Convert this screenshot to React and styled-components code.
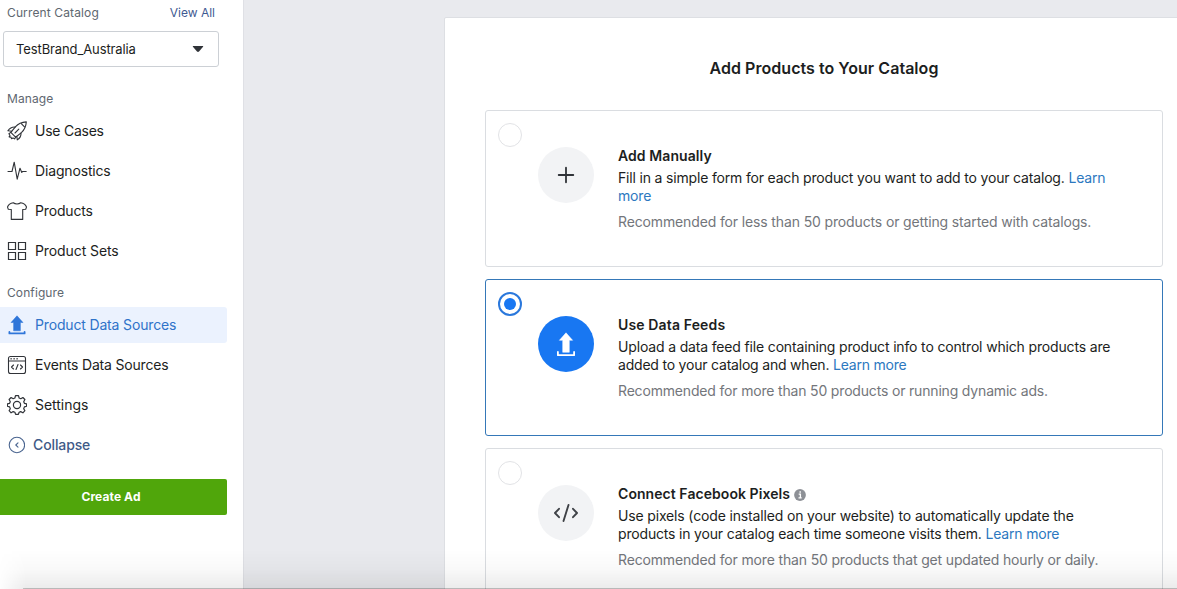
import React from "react";
import styled, { createGlobalStyle } from "styled-components";

const GlobalStyle = createGlobalStyle`
  * { box-sizing: border-box; }
  html, body { margin: 0; overflow: hidden; }
  body { font-family: Inter, Roboto, "Liberation Sans", sans-serif; color: #1c1e21; background: #e9eaee; }
`;

const Page = styled.div`
  position: relative;
  display: flex;
  width: 1177px;
  height: 589px;
  overflow: hidden;
`;

const Sidebar = styled.aside`
  width: 244px;
  flex: none;
  background: #fff;
  border-right: 1px solid #dfe0e5;
`;

const CatalogHeader = styled.div`
  display: flex;
  justify-content: space-between;
  padding: 4px 28px 0 7px;
  height: 31px;
  font-size: 12px;
  line-height: 18px;
  letter-spacing: 0.13px;
  color: #606770;
`;

const ViewAll = styled.a`
  letter-spacing: 0;
  color: #3f5a92;
`;

const CatalogSelect = styled.div`
  display: flex;
  align-items: center;
  justify-content: space-between;
  width: 216px;
  height: 36px;
  margin-left: 3px;
  padding: 0 14px 0 12px;
  border: 1px solid #ccd0d5;
  border-radius: 3px;
  font-size: 13px;
  letter-spacing: -0.11px;
`;

const SectionLabel = styled.div`
  height: ${(p) => p.$height}px;
  padding: ${(p) => p.$top}px 0 0 7px;
  font-size: 12px;
  line-height: 16px;
  letter-spacing: 0.1px;
  color: #606770;
`;

const NavRow = styled.div`
  display: flex;
  align-items: center;
  width: 227px;
  height: 36px;
  margin-bottom: 4px;
  padding-left: 7px;
  gap: 8px;
  border-radius: 0 3px 3px 0;
  background: ${(p) => (p.$active ? "#ebf2fe" : "transparent")};
  color: ${(p) => p.$color || "#1c1e21"};
  font-size: 14px;
  font-weight: ${(p) => p.$weight || 400};
  letter-spacing: ${(p) => p.$ls ?? -0.16}px;
  white-space: nowrap;
  svg { flex: none; }
`;

const NavLabel = styled.span`
  padding-bottom: 2px;
`;

const NavItem = ({ icon, children, ...rest }) => (
  <NavRow {...rest}>{icon}<NavLabel>{children}</NavLabel></NavRow>
);

const CreateButton = styled.div`
  display: flex;
  align-items: center;
  justify-content: center;
  width: 227px;
  height: 36px;
  margin-top: 16px;
  padding: 0 5px 1px 0;
  border-radius: 0 2px 2px 0;
  background: #50a60b;
  color: #fff;
  font-size: 12px;
  font-weight: 700;
  letter-spacing: 0.1px;
`;

const Main = styled.main`
  flex: 1;
  padding: 17px 0 0 200px;
`;

const Panel = styled.section`
  width: 760px;
  height: 640px;
  padding: 0 40px;
  background: #fff;
  border: 1px solid #dddfe3;
  border-radius: 2px;
`;

const PanelTitle = styled.h1`
  width: 678px;
  height: 92px;
  margin: 0;
  padding-top: 40px;
  font-size: 16px;
  font-weight: 600;
  line-height: 20px;
  letter-spacing: 0.04px;
  text-align: center;
`;

const Card = styled.div`
  display: flex;
  width: 678px;
  height: 157px;
  margin-bottom: 12px;
  padding: 12px;
  border: 1px solid ${(p) => (p.$active ? "#3578b8" : "#dadde1")};
  border-radius: 3px;
`;

const Radio = styled.span`
  display: flex;
  align-items: center;
  justify-content: center;
  flex: none;
  width: 24px;
  height: 24px;
  border-radius: 50%;
  border: ${(p) => (p.$active ? "2px solid #2a78dc" : "1px solid #e2e3e6")};
  &::after {
    content: "";
    width: 12px;
    height: 12px;
    border-radius: 50%;
    background: ${(p) => (p.$active ? "#1877f2" : "transparent")};
  }
`;

const IconDisc = styled.span`
  display: flex;
  align-items: center;
  justify-content: center;
  flex: none;
  width: 56px;
  height: 56px;
  margin: 24px 24px 0 16px;
  border-radius: 50%;
  background: ${(p) => (p.$active ? "#1877f2" : "#f2f3f5")};
`;

const CardText = styled.div`
  padding-top: 24px;
  font-size: 14px;
  line-height: 18px;
  white-space: nowrap;
`;

const CardTitle = styled.div`
  display: flex;
  align-items: center;
  gap: 4px;
  height: 18px;
  margin-bottom: 4px;
  font-weight: 600;
  letter-spacing: ${(p) => p.$ls || 0}px;
  svg { position: relative; top: 1px; }
`;

const Line = styled.div`
  letter-spacing: ${(p) => p.$ls ?? -0.16}px;
`;

const Hint = styled(Line)`
  margin-top: 8px;
  color: #73767b;
`;

const Link = styled.a`
  color: #2c78bf;
`;

const BottomShade = styled.div`
  position: absolute;
  left: 0;
  right: 0;
  bottom: 0;
  height: 40px;
  background: linear-gradient(to bottom, rgba(0, 0, 0, 0), rgba(0, 0, 0, 0.022) 50%, rgba(0, 0, 0, 0.08));
  mask-image: linear-gradient(to right, rgba(0, 0, 0, 0.1), #000 26px);
  &::after {
    content: "";
    position: absolute;
    left: 23px;
    right: 0;
    bottom: 0;
    height: 1px;
    background: rgba(0, 0, 0, 0.22);
  }
`;

const Stroke = ({ size = 20, color = "#303338", width = 1.1, children }) => (
  <svg width={size} height={size} viewBox={`0 0 ${size} ${size}`} fill="none" stroke={color}
    strokeWidth={width} strokeLinecap="round" strokeLinejoin="round">{children}</svg>
);

const RocketIcon = () => (
  <Stroke>
    <path d="M19.300.9C15 1.200 11.200 2.700 8.600 5.600L3.800 11.400l4.800 4.800 5.800-4.600c3-2.700 4.600-6.400 4.900-10.700Z" />
    <path d="M14.300 2.600l3.200 3.200" />
    <path d="M8.200 6C5.300 5.800 2.600 7.200.9 9.800l3.900.4M14 12c.2 2.800-1.100 5.200-3.700 6.900l-.5-3.600" />
    <path d="M3.800 11.400 1.900 12.800 3 14.500l-.9 1.400 1.900.2.5 1.600 1.500-.8 1.600 1 1-1.700" />
    <path d="M8 12l3.800-3.800" />
  </Stroke>
);

const PulseIcon = () => (
  <Stroke>
    <path d="M1 10.500h4L7.200 1.200l3 17 2.800-11 1.800 4.300 .6-1h3.800" />
  </Stroke>
);

const ShirtIcon = () => (
  <Stroke>
    <path d="M6.300 1.800C4.200 2.100 1.500 3.400.5 6.100l.8 2.200 3 .2v9.900h11.400V8.500l3-.2.8-2.200c-1-2.700-3.700-4-5.800-4.300-2 1.600-5.400 1.600-7.400 0Z" />
  </Stroke>
);

const GridIcon = () => (
  <Stroke width={1.2}>
    <path d="M1.500 1.500h7v7h-7zM11.500 1.500h7v7h-7zM1.500 11.500h7v7h-7zM11.500 11.500h7v7h-7z" strokeLinejoin="miter" />
  </Stroke>
);

const UploadIcon = () => (
  <svg width="20" height="20" viewBox="0 0 20 20" fill="#2f76d9">
    <path d="M10 .8 16 7.500h-2.600v8.300H6.600V7.500H4Z" stroke="#2f76d9" strokeWidth=".5" strokeLinejoin="round" />
    <path d="M2.400 17v1.400h15.200V17" fill="none" stroke="#2f76d9" strokeWidth="1.800" strokeLinecap="round" strokeLinejoin="round" />
  </svg>
);

const WindowCodeIcon = () => (
  <Stroke>
    <rect x="1.500" y="1.500" width="17" height="17" rx="2" />
    <path d="M1.500 6h17" />
    <path d="M6.500 10 4.500 12l2 2M13.500 10l2 2-2 2M11 9.500l-2 5" />
    <path d="M3.500 3.800h1.200M6.500 3.800h1.200M9.500 3.800h1.200" strokeWidth="1.500" strokeLinecap="butt" />
  </Stroke>
);

const GearIcon = () => (
  <Stroke width={1.2}>
    <circle cx="10" cy="10" r="3.600" />
    <path d="M8.500.7h3l.6 2.300 1.700.7 2.100-1.200 2 2-1.200 2.200.7 1.600 2.200.6v2.300l-2.200.7-.7 1.800 1.200 2-2 2.100-2.200-1.200-1.600.7-.7 2.100H8.600L7.900 17.300l-1.700-.7-2.100 1.200-2-2.100 1.200-2-.7-1.800-2.200-.7V8.900l2.200-.6.7-1.600-1.200-2.200 2-2 2.100 1.200L7.900 3Z" />
  </Stroke>
);

const CollapseIcon = () => (
  <Stroke size={18} color="#4a6590">
    <circle cx="9.900" cy="9" r="7.700" />
    <path d="M11 6.800 8.800 9l2.200 2.200" />
  </Stroke>
);

const PlusIcon = () => (
  <svg width="18" height="18" viewBox="0 0 18 18" stroke="#303338" strokeWidth="1.800" strokeLinecap="round">
    <path d="M9 1.700v14.600M1.700 9h14.600" />
  </svg>
);

const FeedIcon = () => (
  <svg width="20" height="26" viewBox="0 0 20 26" fill="#fff">
    <path d="M10 1.800 16.600 9.300H13.300v12H6.700v-12H3.400Z" stroke="#fff" strokeWidth=".5" strokeLinejoin="round" />
    <path d="M1.900 21v3.200h16.200V21" fill="none" stroke="#fff" strokeWidth="1.800" strokeLinejoin="round" strokeLinecap="round" />
  </svg>
);

const CodeIcon = () => (
  <svg width="26" height="20" viewBox="0 0 26 20" fill="none" stroke="#3f4247" strokeWidth="1.900" strokeLinecap="round" strokeLinejoin="round">
    <path d="M6 5.800 2 10l4 4.200M20 5.800l4 4.200-4 4.200" />
    <path d="M15.500 2 10.500 18" />
  </svg>
);

const InfoIcon = () => (
  <svg width="12" height="12" viewBox="0 0 12 12">
    <circle cx="6" cy="6" r="5.900" fill="#8d9096" />
    <path d="M4.700 5.200h1.700v3.500M4.500 8.900h3.200M5.500 3h1.400" fill="none" stroke="#fff" strokeWidth="1.300" />
  </svg>
);

export default function App() {
  return (
    <>
      <GlobalStyle />
      <Page>
        <Sidebar>
          <CatalogHeader><span>Current Catalog</span><ViewAll>View All</ViewAll></CatalogHeader>
          <CatalogSelect>
            <span>TestBrand_Australia</span>
            <svg width="12" height="8" viewBox="0 0 12 8"><path d="M1.200 1h9.600q.8 0 .3.700L7 6.600q-1 .9-2 0L.9 1.700Q.4 1 1.200 1Z" fill="#303338" /></svg>
          </CatalogSelect>
          <SectionLabel $top={24} $height={46}>Manage</SectionLabel>
          <NavItem icon={<RocketIcon />} $ls={-0.25}>Use Cases</NavItem>
          <NavItem icon={<PulseIcon />}>Diagnostics</NavItem>
          <NavItem icon={<ShirtIcon />}>Products</NavItem>
          <NavItem icon={<GridIcon />} $ls={-0.09}>Product Sets</NavItem>
          <SectionLabel $top={12} $height={34}>Configure</SectionLabel>
          <NavItem icon={<UploadIcon />} $active $color="#2f73c9">Product Data Sources</NavItem>
          <NavItem icon={<WindowCodeIcon />} $ls={-0.18}>Events Data Sources</NavItem>
          <NavItem icon={<GearIcon />} $ls={-0.03}>Settings</NavItem>
          <NavItem icon={<CollapseIcon />} $color="#3f5a87" $weight={500} $ls={-0.12}>Collapse</NavItem>
          <CreateButton>Create Ad</CreateButton>
        </Sidebar>
        <Main>
          <Panel>
            <PanelTitle>Add Products to Your Catalog</PanelTitle>
            <Card>
              <Radio />
              <IconDisc><PlusIcon /></IconDisc>
              <CardText>
                <CardTitle $ls={0.08}>Add Manually</CardTitle>
                <Line $ls={-0.175}>Fill in a simple form for each product you want to add to your catalog. <Link>Learn</Link></Line>
                <Line><Link>more</Link></Line>
                <Hint $ls={-0.135}>Recommended for less than 50 products or getting started with catalogs.</Hint>
              </CardText>
            </Card>
            <Card $active>
              <Radio $active />
              <IconDisc $active><FeedIcon /></IconDisc>
              <CardText>
                <CardTitle $ls={0.14}>Use Data Feeds</CardTitle>
                <Line>Upload a data feed file containing product info to control which products are</Line>
                <Line $ls={-0.205}>added to your catalog and when. <Link>Learn more</Link></Line>
                <Hint $ls={-0.175}>Recommended for more than 50 products or running dynamic ads.</Hint>
              </CardText>
            </Card>
            <Card>
              <Radio />
              <IconDisc><CodeIcon /></IconDisc>
              <CardText>
                <CardTitle $ls={0.06}>Connect Facebook Pixels <InfoIcon /></CardTitle>
                <Line $ls={-0.155}>Use pixels (code installed on your website) to automatically update the</Line>
                <Line $ls={-0.175}>products in your catalog each time someone visits them. <Link>Learn more</Link></Line>
                <Hint $ls={-0.155}>Recommended for more than 50 products that get updated hourly or daily.</Hint>
              </CardText>
            </Card>
          </Panel>
        </Main>
        <BottomShade />
      </Page>
    </>
  );
}
